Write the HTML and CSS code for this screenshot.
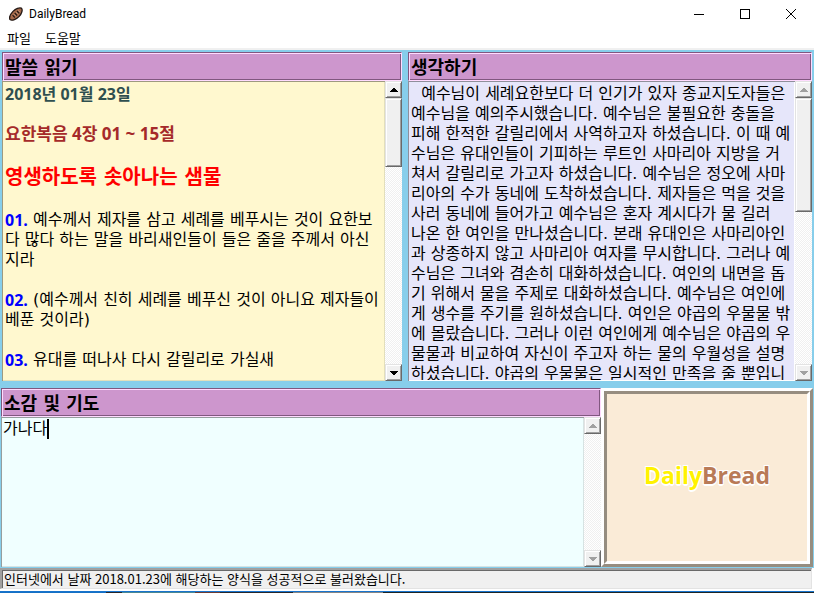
FILE: index.html
```html
<!DOCTYPE html>
<html lang="ko">
<head>
<meta charset="utf-8">
<title>DailyBread</title>
<link rel="stylesheet" href="styles.css">
</head>
<body>
<div class="window">
  <header class="titlebar">
    <svg class="app-icon" viewBox="0 0 14 14" aria-hidden="true">
      <path d="M1 12.6C0 10.500 1.500 7 4 4.400 6.600 1.800 10.500.200 12.400 1.200 14 2.600 12.800 6.600 10.200 9.400 7.600 12.200 3 14.200 1 12.600Z" fill="#a5694a" stroke="#241915" stroke-width="1.300"/>
      <path d="M3.600 8.200l2.200 2.300M5.700 6l2.400 2.500M8 4l2.300 2.400" stroke="#241915" stroke-width="1.200"/>
      <path d="M4.800 7.100l2.100 2.200M6.900 5l2.200 2.300M9.300 3.200l1.900 2" stroke="#d9a98c" stroke-width=".6"/>
    </svg>
    <span class="app-name">DailyBread</span>
    <div class="window-controls">
      <button type="button" aria-label="최소화"><svg viewBox="0 0 10 10"><path d="M0 5.500h10"/></svg></button>
      <button type="button" aria-label="최대화"><svg viewBox="0 0 10 10"><path d="M.5.5h9v9h-9z"/></svg></button>
      <button type="button" aria-label="닫기"><svg viewBox="0 0 10 10"><path d="M0 0l10 10M10 0L0 10" shape-rendering="auto"/></svg></button>
    </div>
  </header>
  <nav class="menubar">
    <button type="button">파일</button>
    <button type="button">도움말</button>
  </nav>
  <main class="workspace">
    <div class="row row-top">
      <section class="pane">
        <h2 class="pane-title">말씀 읽기</h2>
        <div class="field field-reading">
          <div class="text text-reading"><p class="date">2018년 01월 23일</p><p class="passage">요한복음 4장 01 ~ 15절</p><p class="subject">영생하도록 솟아나는 샘물</p><p><b>01.</b> 예수께서 제자를 삼고 세례를 베푸시는 것이 요한보
다 많다 하는 말을 바리새인들이 들은 줄을 주께서 아신
지라</p><p><b>02.</b> (예수께서 친히 세례를 베푸신 것이 아니요 제자들이
베푼 것이라)</p><p><b>03.</b> 유대를 떠나사 다시 갈릴리로 가실새</p></div>
          <div class="scrollbar">
            <button type="button" class="arrow up" aria-label="위로"><svg viewBox="0 0 8 4"><path d="M3 0h2v1h1v1h1v1h1v1H0V3h1V2h1V1h1z"/></svg></button>
            <div class="thumb thumb-reading"></div>
            <button type="button" class="arrow down" aria-label="아래로"><svg viewBox="0 0 8 4"><path d="M0 0h8v1H7v1H6v1H5v1H3V3H2V2H1V1H0z"/></svg></button>
          </div>
        </div>
      </section>
      <section class="pane">
        <h2 class="pane-title">생각하기</h2>
        <div class="field field-thoughts">
          <div class="text"><p>  예수님이 세례요한보다 더 인기가 있자 종교지도자들은
예수님을 예의주시했습니다. 예수님은 불필요한 충돌을
피해 한적한 갈릴리에서 사역하고자 하셨습니다. 이 때 예
수님은 유대인들이 기피하는 루트인 사마리아 지방을 거
쳐서 갈릴리로 가고자 하셨습니다. 예수님은 정오에 사마
리아의 수가 동네에 도착하셨습니다. 제자들은 먹을 것을
사러 동네에 들어가고 예수님은 혼자 계시다가 물 길러
나온 한 여인을 만나셨습니다. 본래 유대인은 사마리아인
과 상종하지 않고 사마리아 여자를 무시합니다. 그러나 예
수님은 그녀와 겸손히 대화하셨습니다. 여인의 내면을 돕
기 위해서 물을 주제로 대화하셨습니다. 예수님은 여인에
게 생수를 주기를 원하셨습니다. 여인은 야곱의 우물물 밖
에 몰랐습니다. 그러나 이런 여인에게 예수님은 야곱의 우
물물과 비교하여 자신이 주고자 하는 물의 우월성을 설명
하셨습니다. 야곱의 우물물은 일시적인 만족을 줄 뿐입니</p></div>
          <div class="scrollbar scrollbar-idle">
            <button type="button" class="arrow up" aria-label="위로"><svg viewBox="0 0 8 4"><path d="M3 0h2v1h1v1h1v1h1v1H0V3h1V2h1V1h1z"/></svg></button>
            <div class="thumb thumb-thoughts"></div>
            <button type="button" class="arrow down" aria-label="아래로"><svg viewBox="0 0 8 4"><path d="M0 0h8v1H7v1H6v1H5v1H3V3H2V2H1V1H0z"/></svg></button>
          </div>
        </div>
      </section>
    </div>
    <div class="row row-bottom">
      <section class="pane">
        <h2 class="pane-title"><label for="prayer">소감 및 기도</label></h2>
        <div class="field field-prayer">
          <textarea id="prayer" spellcheck="false">가나다</textarea>
          <span class="caret"></span>
          <div class="scrollbar scrollbar-idle">
            <button type="button" class="arrow up" aria-label="위로"><svg viewBox="0 0 8 4"><path d="M3 0h2v1h1v1h1v1h1v1H0V3h1V2h1V1h1z"/></svg></button>
            <button type="button" class="arrow down" aria-label="아래로"><svg viewBox="0 0 8 4"><path d="M0 0h8v1H7v1H6v1H5v1H3V3H2V2H1V1H0z"/></svg></button>
          </div>
        </div>
      </section>
      <div class="brand"><div class="brand-inner"><span class="brand-daily">Daily</span><span class="brand-bread">Bread</span></div></div>
    </div>
  </main>
  <footer class="statusbar"><div class="status">인터넷에서 날짜 2018.01.23에 해당하는 양식을 성공적으로 불러왔습니다.</div></footer>
  <div class="desktop-edge"></div>
</div>
</body>
</html>
```
FILE: styles.css
```css
* { box-sizing: border-box; }

body {
  margin: 0;
  font-family: "DejaVu Sans", "Noto Sans CJK KR", sans-serif;
  font-size: 16px;
  line-height: 20px;
  color: #000;
}

h2, p { margin: 0; }

button {
  margin: 0;
  padding: 0;
  border: 0;
  background: none;
  font: inherit;
  color: inherit;
}

.window {
  display: flex;
  flex-direction: column;
  height: 100vh;
  background: #fff;
  overflow: hidden;
}

.titlebar {
  display: flex;
  align-items: center;
  flex: none;
  height: 28px;
  padding-left: 9px;
}

.app-icon { width: 14px; height: 14px; }

.app-name {
  margin-left: 6px;
  font: 12px/16px Roboto, sans-serif;
}

.window-controls { display: flex; margin-left: auto; }

.window-controls button {
  display: flex;
  align-items: center;
  justify-content: center;
  width: 46px;
  height: 28px;
}

.window-controls svg {
  width: 10px;
  height: 10px;
  overflow: visible;
  fill: none;
  stroke: #000;
  shape-rendering: crispEdges;
}

.menubar {
  display: flex;
  flex: none;
  gap: 14px;
  height: 22px;
  padding-left: 7px;
  border-bottom: 2px solid #f0f0f0;
  font: 13px/20px "Noto Sans CJK KR", sans-serif;
}

.workspace {
  display: grid;
  grid-template-rows: 329fr 179fr;
  gap: 7px;
  flex: 1;
  min-height: 0;
  padding: 2px 1px 1px;
  background: #87ceeb;
}

.row { display: grid; min-height: 0; }

.row-top {
  grid-template-columns: 400fr 404fr;
  gap: 6px;
  padding: 0 1px;
}

.row-bottom { grid-template-columns: 1fr 212px; }

.pane {
  display: flex;
  flex-direction: column;
  min-width: 0;
  min-height: 0;
}

.pane-title {
  flex: none;
  height: 29px;
  padding: 1px 0 0 2px;
  border: 1px solid;
  border-color: #80577f #ffdbff #ffdbff #80577f;
  background: #cd96cd;
  box-shadow: inset 1px 1px #ffdbff, inset -1px -1px #80577f;
  font-size: 18px;
  line-height: 28px;
}

.field {
  position: relative;
  display: flex;
  flex: 1;
  min-height: 0;
  border-top: 1px solid;
  border-left: 1px solid;
}

.field-reading { background: #fff8cf; border-color: #9e9a80; }
.field-thoughts { background: #e6e6fa; border-color: #8f8f9b; }
.field-prayer { background: #f0ffff; border-color: #959e9e; }

.text {
  flex: 1;
  min-width: 0;
  padding: 2px 0 0 2px;
  border-right: 1px solid #e3dfbb;
  border-bottom: 1px solid #e3dfbb;
  white-space: pre;
  overflow: hidden;
}

.field-thoughts .text { border-color: #fff; }

.text-reading {
  display: flex;
  flex-direction: column;
  gap: 20px;
}

.text b, .date, .passage {
  font-family: "Open Sans", "Noto Sans CJK KR", sans-serif;
  font-weight: 700;
}

.text b {
  display: inline-block;
  vertical-align: top;
  color: #00f;
}

.date { color: #2f4f4f; }

.passage {
  font-size: 17px;
  color: #a52a2a;
}

.subject {
  font-size: 20px;
  font-weight: 700;
  line-height: 26px;
  color: #f00;
}

textarea {
  flex: 1;
  min-width: 0;
  padding: 1px;
  border: 0;
  border-right: 1px solid #d7e3e3;
  border-bottom: 1px solid #d7e3e3;
  outline: 0;
  resize: none;
  background: none;
  color: #000;
  font: inherit;
  caret-color: transparent;
}

.caret {
  position: absolute;
  top: 1px;
  left: 45px;
  width: 2px;
  height: 20px;
  background: #000;
}

.scrollbar {
  display: flex;
  flex-direction: column;
  flex: none;
  width: 17px;
  margin-top: -1px;
  background: repeating-conic-gradient(#f0f0f0 0 25%, #fff 0 50%) 0 0 / 2px 2px;
}

.arrow, .thumb {
  flex: none;
  border: 1px solid;
  border-color: #e3e3e3 #696969 #696969 #e3e3e3;
  background: #f0f0f0;
  box-shadow: inset 1px 1px #fff, inset -1px -1px #a0a0a0;
}

.arrow {
  display: flex;
  align-items: center;
  justify-content: center;
  height: 17px;
}

.arrow svg {
  width: 8px;
  height: 4px;
  fill: #000;
  shape-rendering: crispEdges;
}

.scrollbar-idle svg { fill: #a0a0a0; }
.down { margin-top: auto; }
.thumb-reading { height: 23%; }
.thumb-thoughts { height: 38%; }

.brand {
  border: 3px solid;
  border-color: #fff #968d80 #968d80 #fff;
}

.brand-inner {
  display: flex;
  align-items: center;
  justify-content: center;
  height: 100%;
  padding-bottom: 6px;
  border: 3px solid;
  border-color: #968d80 #fff #fff #968d80;
  background: #faebd7;
  font: 700 23px/32px "Open Sans", sans-serif;
  text-shadow: 1px 1px #fff, -1px -1px #fff, 1px -1px #fff, -1px 1px #fff, 0 2px #fff;
}

.brand-daily { color: #fff200; }
.brand-bread { color: #b97a57; }

.statusbar {
  flex: none;
  height: 23px;
  padding-bottom: 2px;
  padding-right: 2px;
  background: #fff;
}

.status {
  height: 21px;
  padding-left: 2px;
  border: solid;
  border-width: 2px 1px 1px 2px;
  border-color: #a0a0a0 #e3e3e3 #e3e3e3 #a0a0a0;
  background: #f0f0f0;
  box-shadow: inset 1px 1px #696969;
  font: 13px/18px "Noto Sans CJK KR", sans-serif;
  white-space: nowrap;
}

.desktop-edge {
  flex: none;
  height: 2px;
  border-top: 1px solid #1874cd;
  background: linear-gradient(90deg, #1670c4 0 13%, #26272b 13% 15%, #4b8791 15% 24%, #6b3b33 24% 27%, #26272b 27% 36%, #858585 36% 47%, #1c2526 47%);
}
```
